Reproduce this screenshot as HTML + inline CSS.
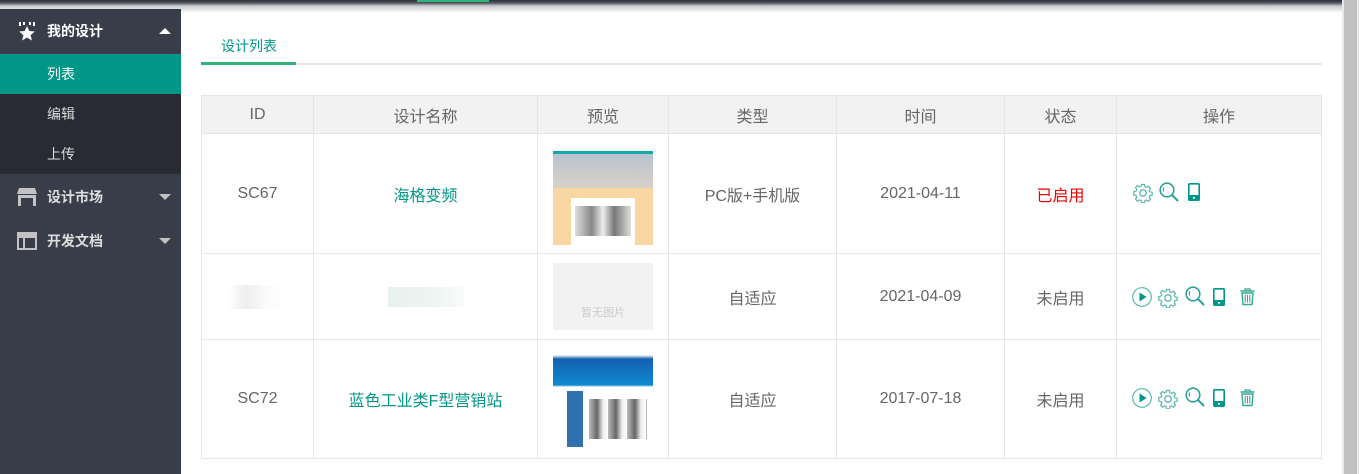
<html><head><style>
body{margin:0;width:1359px;height:474px;overflow:hidden;background:#fff;font-family:"Liberation Sans","Noto Sans CJK SC",sans-serif;font-size:14px;color:#666;position:relative}
.top{position:absolute;left:0;top:0;width:1342px;height:14px;background:linear-gradient(#2b2e35 0,#555a62 3px,#c9cacd 6px,#fff 13px)}
.side{position:absolute;left:0;top:9px;width:181px;height:465px;background:#393D49}
.it{position:absolute;left:0;width:181px;height:40px;line-height:40px;color:#fff}
.it span{position:absolute;left:47px}
.sub{background:#282b33;color:#d8d8d8}
.tri{position:absolute;left:159px;width:0;height:0;border-left:6px solid transparent;border-right:6px solid transparent}
table{position:absolute;left:201px;top:95px;border-collapse:collapse;width:1121px}
td,th{border:1px solid #e6e6e6;text-align:center;font-weight:normal;padding:0}
th{background:#f2f2f2;height:38px;color:#666}
.g{color:#009688}
svg.i{position:absolute}
</style></head><body>
<svg width="0" height="0" style="position:absolute"><defs>
<g id="gear"><circle cx="10" cy="10" r="3.2" fill="none" stroke="#5bb7ad" stroke-width="1.3"/><path d="M8.6 1.5h2.8l.5 2.3 1.6.7 2-1.3 2 2-1.3 2 .7 1.6 2.3.5v2.8l-2.3.5-.7 1.6 1.3 2-2 2-2-1.3-1.6.7-.5 2.3H8.6l-.5-2.3-1.6-.7-2 1.3-2-2 1.3-2-.7-1.6-2.3-.5V8.6l2.3-.5.7-1.6-1.3-2 2-2 2 1.3 1.6-.7z" fill="none" stroke="#5bb7ad" stroke-width="1.2"/></g>
<g id="mag"><circle cx="8" cy="8" r="6.8" fill="none" stroke="#2fa196" stroke-width="1.6"/><path d="M4.5 5.5v4" stroke="#2fa196" stroke-width="1.2"/><path d="M13 13l5.5 5.5" stroke="#2fa196" stroke-width="2" stroke-linecap="round"/></g>
<g id="ph"><rect x="0.8" y="0.8" width="10.4" height="16.4" rx="1" fill="none" stroke="#00968a" stroke-width="1.6"/><rect x="0.8" y="12" width="10.4" height="5.2" fill="#00968a"/><rect x="5" y="14" width="2" height="1.6" fill="#fff"/></g>
<g id="play"><circle cx="10" cy="10" r="9.3" fill="none" stroke="#5bb7ad" stroke-width="1.2"/><path d="M7.5 5.5v9l7-4.5z" fill="#00968a"/></g>
<g id="tr"><path d="M0.5 3h14" stroke="#3aa598" stroke-width="1.5"/><path d="M5 3V1h5v2" fill="none" stroke="#3aa598" stroke-width="1.2"/><path d="M2 5h11l-1 11.5H3z" fill="none" stroke="#3aa598" stroke-width="1.4"/><path d="M5.2 7v7.5M7.5 7v7.5M9.8 7v7.5" stroke="#3aa598" stroke-width="1.1"/></g>
</defs></svg>
<div class="top"></div>
<div style="position:absolute;left:417px;top:0;width:72px;height:2px;background:#2fb37a"></div>
<div style="position:absolute;left:1342px;top:0;width:17px;height:474px;background:#eaeaea"></div>
<div style="position:absolute;left:1344px;top:0;width:13px;height:474px;background:#c1c1c1"></div>
<div class="side">
 <div class="it" style="top:0;height:45px;line-height:45px;font-weight:bold"><svg style="position:absolute;left:17px;top:13px" width="20" height="20" viewBox="0 0 20 20"><path d="M2 0h2v4h-2zM6 0h2v3h-2zM12 0h2v3h-2zM16 0h2v4h-2z" fill="#fff"/><path d="M10 4l2.3 5 5.5.5-4.2 3.6 1.3 5.4-4.9-3-4.9 3 1.3-5.4-4.2-3.6 5.5-.5z" fill="#fff"/></svg><span>我的设计</span><div class="tri" style="top:19px;border-bottom:6px solid #fff"></div></div>
 <div class="it" style="top:45px;background:#009688"><span>列表</span></div>
 <div class="it sub" style="top:85px"><span>编辑</span></div>
 <div class="it sub" style="top:125px"><span>上传</span></div>
 <div class="it" style="top:168px;color:#ddd;font-weight:bold"><svg style="position:absolute;left:17px;top:11px" width="20" height="18" viewBox="0 0 20 18"><path d="M2 0h16l2 6H0z" fill="#c2c2c2"/><path d="M1 7h18v11H1z" fill="#c2c2c2"/><path d="M4 10h12v8H4z" fill="#393D49"/></svg><span>设计市场</span><div class="tri" style="top:17px;border-top:6px solid #c2c2c2"></div></div>
 <div class="it" style="top:212px;color:#ddd;font-weight:bold"><svg style="position:absolute;left:17px;top:11px" width="20" height="18" viewBox="0 0 20 18"><path d="M0 0h20v18H0z" fill="#c2c2c2"/><path d="M2 6h4v10H2zM8 6h10v10H8z" fill="#393D49"/></svg><span>开发文档</span><div class="tri" style="top:17px;border-top:6px solid #c2c2c2"></div></div>
</div>
<div style="position:absolute;left:221px;top:36px;color:#009688">设计列表</div>
<div style="position:absolute;left:201px;top:63px;width:1121px;height:2px;background:#e6e6e6"></div>
<div style="position:absolute;left:201px;top:62px;width:95px;height:3px;background:#2fb37a"></div>
<table>
<tr><th style="width:111px">ID</th><th style="width:223px">设计名称</th><th style="width:130px">预览</th><th style="width:167px">类型</th><th style="width:167px">时间</th><th style="width:111px">状态</th><th>操作</th></tr>
<tr style="height:120px"><td>SC67</td><td class="g">海格变频</td><td><div style="margin:auto;width:100px;height:102px;background:linear-gradient(#fff 0,#fff 8px,#1aa 8px,#1aa 11px,#b8c3cf 11px,#d8d0c8 45px,#f9d7a3 45px);position:relative"><div style="position:absolute;left:18px;top:55px;width:64px;height:47px;background:#fff"><div style="margin:8px 4px;height:30px;background:linear-gradient(90deg,#ddd,#888 30%,#eee 50%,#777 70%,#ddd)"></div></div></div></td><td>PC版+手机版</td><td>2021-04-11</td><td style="color:#e00">已启用</td><td></td></tr>
<tr style="height:86px"><td><div style="margin:auto;width:60px;height:24px;background:linear-gradient(90deg,#fff,#eee 30%,#fafafa 60%,#fff)"></div></td><td><div style="margin:auto;width:76px;height:20px;background:linear-gradient(90deg,#e6f0ee,#eef5f3 60%,#f8fbfa)"></div></td><td><div style="margin:auto;width:100px;height:67px;background:#f2f2f2;color:#ccc;font-size:11px;line-height:100px">暂无图片</div></td><td>自适应</td><td>2021-04-09</td><td>未启用</td><td></td></tr>
<tr style="height:119px"><td>SC72</td><td class="g">蓝色工业类F型营销站</td><td><div style="margin:auto;width:100px;height:105px;background:linear-gradient(#fff 0,#fff 8px,#1560b0 12px,#0d8ad0 38px,#fff 40px);position:relative"><div style="position:absolute;left:14px;top:44px;width:80px;height:56px;background:linear-gradient(90deg,#3070b0 0,#3070b0 20%,#fff 20%);"><div style="margin:8px 0 0 22px;height:40px;background:repeating-linear-gradient(90deg,#bbb 0,#666 8px,#eee 14px,#fff 19px)"></div></div></div></td><td>自适应</td><td>2017-07-18</td><td>未启用</td><td></td></tr>
</table>
<svg class="i" style="left:1133px;top:183px" width="20" height="20" viewBox="0 0 20 20"><use href="#gear"/></svg>
<svg class="i" style="left:1159px;top:182px" width="20" height="20" viewBox="0 0 20 20"><use href="#mag"/></svg>
<svg class="i" style="left:1188px;top:183px" width="12" height="18" viewBox="0 0 12 18"><use href="#ph"/></svg>
<svg class="i" style="left:1132px;top:287px" width="20" height="20" viewBox="0 0 20 20"><use href="#play"/></svg>
<svg class="i" style="left:1158px;top:288px" width="20" height="20" viewBox="0 0 20 20"><use href="#gear"/></svg>
<svg class="i" style="left:1185px;top:286px" width="20" height="20" viewBox="0 0 20 20"><use href="#mag"/></svg>
<svg class="i" style="left:1213px;top:288px" width="12" height="18" viewBox="0 0 12 18"><use href="#ph"/></svg>
<svg class="i" style="left:1240px;top:288px" width="15" height="18" viewBox="0 0 15 18"><use href="#tr"/></svg>
<svg class="i" style="left:1132px;top:388px" width="20" height="20" viewBox="0 0 20 20"><use href="#play"/></svg>
<svg class="i" style="left:1158px;top:389px" width="20" height="20" viewBox="0 0 20 20"><use href="#gear"/></svg>
<svg class="i" style="left:1185px;top:387px" width="20" height="20" viewBox="0 0 20 20"><use href="#mag"/></svg>
<svg class="i" style="left:1213px;top:389px" width="12" height="18" viewBox="0 0 12 18"><use href="#ph"/></svg>
<svg class="i" style="left:1240px;top:389px" width="15" height="18" viewBox="0 0 15 18"><use href="#tr"/></svg>
</body></html>
